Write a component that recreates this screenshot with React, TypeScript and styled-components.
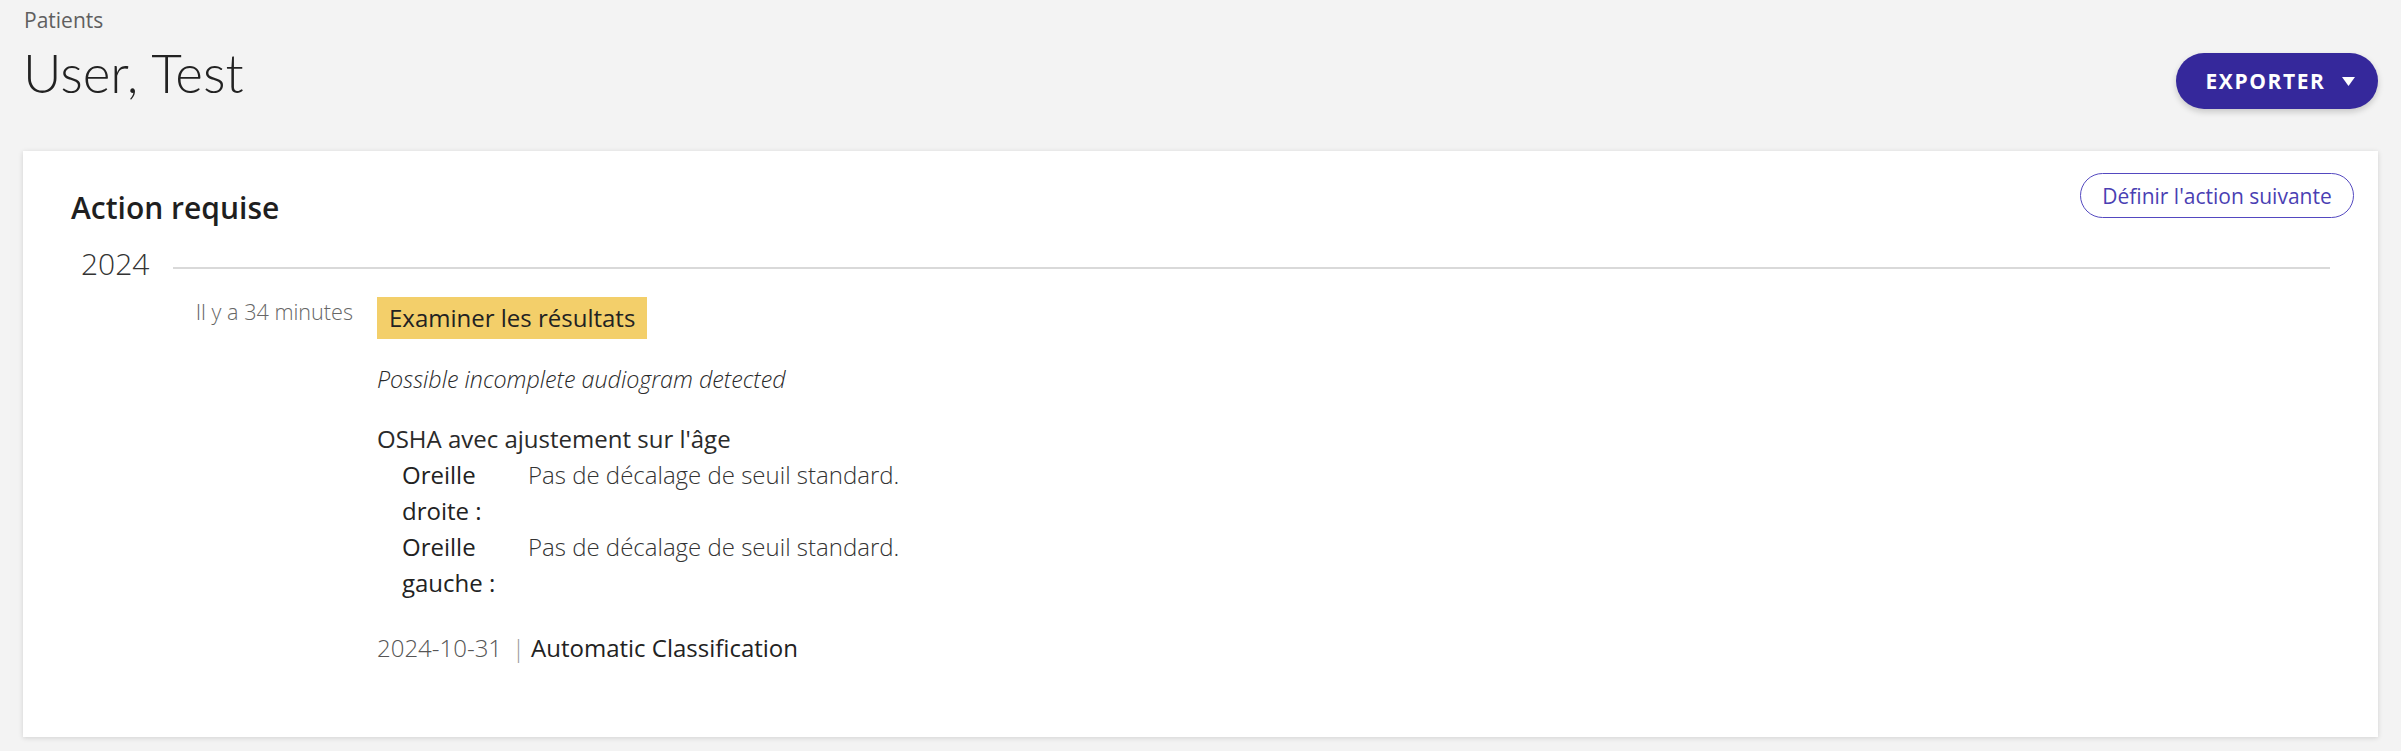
import React from "react";
import styled, { createGlobalStyle } from "styled-components";

const GlobalStyle = createGlobalStyle`
  html, body { margin: 0; padding: 0; background: #f3f3f3; }
  body { font-family: "Open Sans", "Liberation Sans", sans-serif; color: #222; }
  * { box-sizing: border-box; }
`;

const Page = styled.div`
  padding: 5px 23px 14px 23px;
  min-height: 751px;
`;

const Header = styled.header`
  display: flex;
  justify-content: space-between;
  align-items: flex-start;
`;

const TitleBlock = styled.div`
  display: flex;
  flex-direction: column;
`;

const Breadcrumb = styled.div`
  font-size: 21px;
  line-height: 30px;
  color: #5f5f5f;
  padding-left: 1px;
`;

const PageTitle = styled.h1`
  margin: 6px 0 0 0;
  font-family: "Lato", "Open Sans", sans-serif;
  font-weight: 300;
  font-size: 53px;
  line-height: 64px;
  color: #222;
`;

const ExportButton = styled.button`
  margin-top: 48px;
  height: 56px;
  width: 202px;
  border: none;
  border-radius: 28px;
  background: #35289b;
  color: #fff;
  font-family: "Open Sans", sans-serif;
  font-weight: 700;
  font-size: 21px;
  letter-spacing: 1.6px;
  display: flex;
  align-items: center;
  justify-content: center;
  gap: 16px;
  padding: 0 0 0 6px;
  box-shadow: 0 3px 6px rgba(0, 0, 0, 0.18);
`;

const Card = styled.section`
  margin-top: 42px;
  background: #fff;
  box-shadow: 0 1px 5px rgba(0, 0, 0, 0.14);
  padding: 22px 24px 71px 24px;
`;

const CardHeader = styled.div`
  display: flex;
  justify-content: space-between;
  align-items: flex-start;
`;

const CardTitle = styled.h2`
  margin: 17px 0 0 24px;
  font-size: 30px;
  line-height: 36px;
  font-weight: 600;
  color: #1f1f1f;
`;

const OutlineButton = styled.button`
  height: 45px;
  width: 274px;
  border: 1.5px solid #5449c0;
  border-radius: 23px;
  background: #fff;
  color: #4a3fb3;
  font-family: "Open Sans", sans-serif;
  font-size: 21px;
  font-weight: 400;
  padding: 0;
`;

const YearRow = styled.div`
  margin-top: 18px;
  display: flex;
  align-items: center;
`;

const Year = styled.div`
  padding-left: 34px;
  font-size: 30px;
  line-height: 40px;
  font-weight: 300;
  color: #333;
`;

const Rule = styled.div`
  flex: 1;
  height: 2px;
  margin: 8px 24px 0 23px;
  background: #d9d9d9;
`;

const Entry = styled.div`
  margin-top: 13px;
  display: grid;
  grid-template-columns: 306px 1fr;
  column-gap: 24px;
`;

const TimeAgo = styled.div`
  text-align: right;
  font-size: 21.6px;
  line-height: 30px;
  font-weight: 300;
  color: #666;
`;

const EntryBody = styled.div`
  display: flex;
  flex-direction: column;
  align-items: flex-start;
`;

const Badge = styled.div`
  background: #f3cf6a;
  height: 42px;
  line-height: 42px;
  padding: 0 12px;
  font-size: 24px;
  color: #222;
`;

const Text = styled.div<{ $italic?: boolean; $top: number }>`
  margin-top: ${(p) => p.$top}px;
  font-size: ${(p) => (p.$italic ? 23.3 : 24)}px;
  line-height: 36px;
  font-weight: ${(p) => (p.$italic ? 300 : 400)};
  font-style: ${(p) => (p.$italic ? "italic" : "normal")};
  color: #2a2a2a;
`;

const EarTable = styled.div`
  display: grid;
  grid-template-columns: 126px auto;
  padding-left: 25px;
`;

const EarLabel = styled.div`
  font-size: 24px;
  line-height: 36px;
  font-weight: 400;
  color: #222;
  width: 110px;
`;

const EarValue = styled.div`
  font-size: 24px;
  line-height: 36px;
  font-weight: 300;
  color: #333;
`;

const Footer = styled.div`
  margin-top: 29px;
  display: flex;
  align-items: center;
  font-size: 24px;
  line-height: 36px;
`;

const DateText = styled.span`
  font-weight: 300;
  color: #555;
`;

const Separator = styled.span`
  font-weight: 300;
  color: #9a9a9a;
  margin: 0 6px 0 10px;
`;

const Source = styled.span`
  font-weight: 400;
  color: #222;
`;

const Caret = () => (
  <svg width="13" height="9" viewBox="0 0 13 9" aria-hidden="true">
    <path d="M0 0 L13 0 L6.5 9 Z" fill="#fff" />
  </svg>
);

const ears = [
  { label: "Oreille droite :", value: "Pas de décalage de seuil standard." },
  { label: "Oreille gauche :", value: "Pas de décalage de seuil standard." },
];

export default function App() {
  return (
    <>
      <GlobalStyle />
      <Page>
        <Header>
          <TitleBlock>
            <Breadcrumb>Patients</Breadcrumb>
            <PageTitle>User, Test</PageTitle>
          </TitleBlock>
          <ExportButton>
            EXPORTER
            <Caret />
          </ExportButton>
        </Header>
        <Card>
          <CardHeader>
            <CardTitle>Action requise</CardTitle>
            <OutlineButton>Définir l'action suivante</OutlineButton>
          </CardHeader>
          <YearRow>
            <Year>2024</Year>
            <Rule />
          </YearRow>
          <Entry>
            <TimeAgo>Il y a 34 minutes</TimeAgo>
            <EntryBody>
              <Badge>Examiner les résultats</Badge>
              <Text $italic $top={22}>
                Possible incomplete audiogram detected
              </Text>
              <Text $top={24}>OSHA avec ajustement sur l'âge</Text>
              <EarTable>
                {ears.map((e) => (
                  <React.Fragment key={e.label}>
                    <EarLabel>{e.label}</EarLabel>
                    <EarValue>{e.value}</EarValue>
                  </React.Fragment>
                ))}
              </EarTable>
              <Footer>
                <DateText>2024-10-31</DateText>
                <Separator>|</Separator>
                <Source>Automatic Classification</Source>
              </Footer>
            </EntryBody>
          </Entry>
        </Card>
      </Page>
    </>
  );
}
